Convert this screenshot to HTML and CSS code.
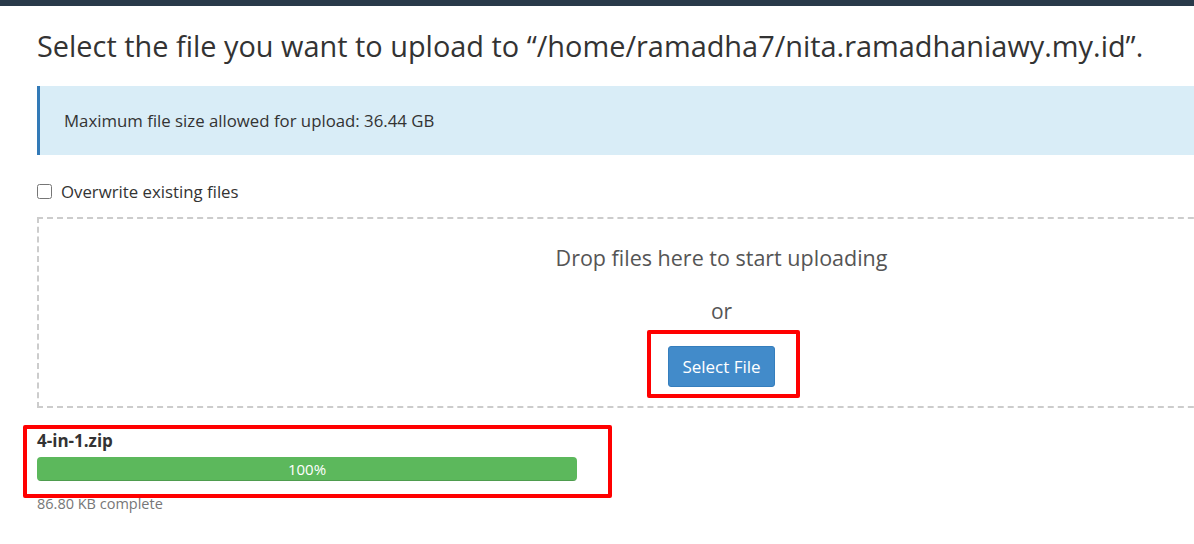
FILE: index.html
```html
<!DOCTYPE html>
<html lang="en">
<head>
    <meta charset="UTF-8">
    <meta name="viewport" content="width=device-width, initial-scale=1.0">
    <title>File Upload</title>
    <link rel="stylesheet" href="styles.css">
</head>
<body>

    <div class="topbar"></div>

    <div class="page">
        <h1>Select the file you want to upload to “/home/ramadha7/nita.ramadhaniawy.my.id”.</h1>

        <div class="alert">Maximum file size allowed for upload: 36.44 GB</div>

        <label class="overwrite">
            <input type="checkbox" id="overwrite">
            <span>Overwrite existing files</span>
        </label>

        <div class="dropzone">
            <p class="drop-text">Drop files here to start uploading</p>
            <p class="or">or</p>
            <div class="btn-wrap">
                <button class="btn-select">Select File</button>
                <span class="mark mark-btn"></span>
            </div>
        </div>

        <div class="upload-item">
            <span class="mark mark-file"></span>
            <div class="file-name">4-in-1.zip</div>
            <div class="progress">
                <div class="progress-bar" style="width: 100%">100%</div>
            </div>
            <div class="file-status">86.80 KB complete</div>
        </div>
    </div>

</body>
</html>
```

FILE: styles.css
```css
* {
    box-sizing: border-box;
    margin: 0;
    padding: 0;
}
html, body {
    overflow: hidden;
}
body {
    font-family: "Open Sans", Arial, sans-serif;
    background-color: #fff;
    color: #333;
    width: 1194px;
    height: 544px;
}
.topbar {
    height: 6px;
    background-color: #293a4a;
}
.page {
    width: 1404px;
    padding-left: 37px;
}
h1 {
    font-size: 28.9px;
    font-weight: 400;
    line-height: 40px;
    margin-top: 20px;
    white-space: nowrap;
    color: #333;
}
.alert {
    margin-top: 20px;
    height: 69px;
    background-color: #d9edf7;
    border-left: 3px solid #337ab7;
    padding: 0 0 0 24px;
    display: flex;
    align-items: center;
    font-size: 16.8px;
    color: #333;
}
.overwrite {
    display: flex;
    align-items: center;
    gap: 9px;
    margin-top: 26px;
    font-size: 16.8px;
    height: 20px;
}
.overwrite input {
    width: 15px;
    height: 15px;
    margin: 0;
}
.dropzone {
    margin-top: 16px;
    height: 191px;
    border: 2px dashed #ccc;
    border-right: none;
    text-align: center;
    color: #555;
}
.drop-text {
    font-size: 21.5px;
    margin-top: 25px;
    line-height: 28px;
}
.or {
    font-size: 21px;
    margin-top: 25px;
    line-height: 28px;
}
.btn-wrap {
    position: relative;
    display: inline-block;
    margin-top: 21px;
}
.btn-select {
    background-color: #428bca;
    border: 1px solid #357ebd;
    border-radius: 3px;
    color: #fff;
    font-family: "Open Sans", Arial, sans-serif;
    font-size: 17px;
    width: 107px;
    height: 41px;
    cursor: pointer;
}
.mark {
    position: absolute;
    border: 4px solid #f00;
    border-radius: 2px;
}
.mark-btn {
    left: -21px;
    top: -16px;
    right: -25px;
    bottom: -11px;
}
.upload-item {
    position: relative;
    width: 540px;
    margin-top: 23px;
}
.mark-file {
    left: -14px;
    top: -6px;
    right: -35px;
    bottom: 16px;
}
.file-name {
    font-weight: 700;
    font-size: 17px;
    line-height: 20px;
}
.progress {
    margin-top: 6px;
    height: 24px;
    border-radius: 4px;
    background-color: #f5f5f5;
    overflow: hidden;
}
.progress-bar {
    height: 100%;
    background-color: #5cb85c;
    box-shadow: inset 0 -1px 0 rgba(0, 0, 0, 0.15);
    color: #fff;
    font-size: 15px;
    line-height: 24px;
    text-align: center;
}
.file-status {
    margin-top: 13px;
    font-size: 14.5px;
    line-height: 20px;
    color: #777;
}
```
